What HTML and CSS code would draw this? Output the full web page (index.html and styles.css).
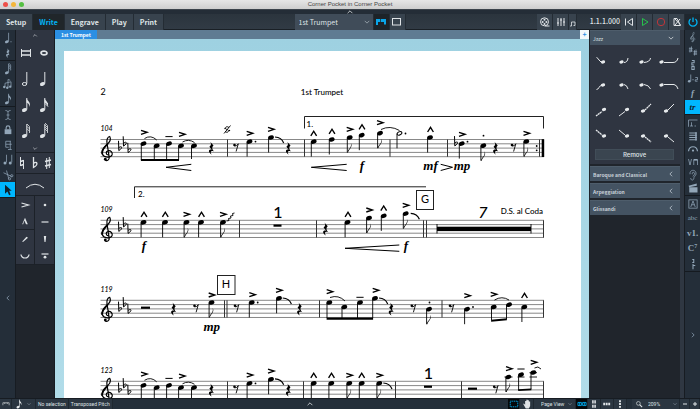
FILE: index.html
```html
<!DOCTYPE html>
<html lang="en">
<head>
<meta charset="utf-8">
<title>Corner Pocket in Corner Pocket</title>
<link rel="stylesheet" href="styles.css">
</head>
<body>
<svg class="defs" width="0" height="0" aria-hidden="true">
  <defs>
    <ellipse id="head" rx="3" ry="2.100" transform="rotate(-22)"/>
    <g id="qd"><use href="#head"/><path d="M-2.4 .6V15" class="ln"/></g>
    <g id="ed"><use href="#qd"/><path d="M-2.4 15C-1.5 11 2.2 10.5 1.2 5.5C3.4 9.500-.6 11.500-1.700 15Z"/></g>
    <g id="hd"><ellipse rx="2.5" ry="1.600" transform="rotate(-25)" fill="none" stroke="currentColor" stroke-width="1"/><path d="M-2.500 .5V15" class="ln"/></g>
    <path id="qr" d="M-1.300-6.500L2-2.800C.2-1 .3.500 2.500 3.200C-.2 2-1.900 3.200.2 6.600C-3.800 3.800-3.200.9.300 1.500L-2.100-1.500C0-3.200-.2-4.600-1.300-6.500Z"/>
    <g id="er"><circle cx="-1.500" cy="-2" r="1.300"/><path d="M-1.600-.9Q1-.6 2.300-3.200L.1 4.500" class="ln" stroke-width="1"/></g>
    <path id="flat" d="M-1.500-7.500L-1.200 2.300C3-.3 2.200-3-1.200-.7" fill="none" stroke="currentColor" stroke-width="1"/>
    <g id="clef"><path d="M.8 6.500C-2 6.300-1.800 2.900.3 2.300C3.400 1.600 5.300 4 4.600 6.200C3.200 9.700-3.600 9.200-5.200 5.500C-6.300.8-2.200-2 .3-4.600C3-7.400 3.400-10 2.200-12C0-11.700-1-8.500-.5-5.500L1.700 8.700C2.100 11.800-.9 12.900-2.600 11.300" fill="none" stroke="currentColor" stroke-width="1.200"/><path d="M-5.200 5.500C-6.300.8-2.200-2 .3-4.600" fill="none" stroke="currentColor" stroke-width="1.800"/><circle cx="-2.200" cy="10.700" r="1.400"/></g>
    <path id="acc" d="M-3-2L3 0L-3 2" fill="none" stroke="currentColor" stroke-width="1.400"/>
    <path id="mar" d="M-2.900 2.300L0-2.300L2.900 2.300" fill="none" stroke="currentColor" stroke-width="1.400"/>
    <path id="ten" d="M-3.600 0H3.600" fill="none" stroke="currentColor" stroke-width="1"/>
    <circle id="dot" r=".9"/>
    <path id="fall" d="M0 0Q6.500.3 8.700 6" fill="none" stroke="currentColor" stroke-width="1.200"/>
    <g id="staff"><path d="M100.500 0H544M100.500 4.300H544M100.500 8.600H544M100.500 12.900H544M100.500 17.200H544" fill="none" stroke="#555" stroke-width=".7"/>
      <use href="#clef" x="107.500" y="9"/><use href="#flat" x="120" y="8.800"/><use href="#flat" x="124.700" y="4.300"/><use href="#flat" x="129.300" y="10.800"/></g>
    <path id="bar" d="M0 0V17.200" fill="none" stroke="#333" stroke-width="1"/>
    <g id="opening">
      <use href="#head" x="143.500" y="143.600"/><use href="#head" x="156.700" y="145.800"/><use href="#head" x="169" y="143.600"/><use href="#head" x="181" y="145.800"/><use href="#head" x="194" y="145.800"/>
      <path class="ln" d="M141.300 144V160M154.300 146V160M166.600 144V160M178.600 146V160M191.500 146V159"/><path d="M140.900 159H179V161H140.900Z"/>
      <use href="#acc" x="144" y="132.300"/><use href="#ten" x="169" y="136.600"/><use href="#acc" x="182" y="134.300"/>
      <path class="slur" d="M144.500 138.500Q151 134.500 156.700 140M182.500 142Q188.500 138.500 194.500 142.500"/>
      <use href="#qr" x="211.500" y="148.200"/><use href="#bar" x="227.500" y="139.500"/><use href="#er" x="236" y="147"/>
      <use href="#qd" x="249.500" y="141.600"/><use href="#dot" x="255.500" y="141.600"/><use href="#acc" x="249.700" y="133.300"/>
      <use href="#qd" x="271" y="137.500"/><use href="#acc" x="271" y="129.300"/><use href="#fall" x="275" y="137"/><use href="#qr" x="288.500" y="148.200"/>
    </g>
    <path id="down" d="M-3-1.500L0 1.500L3-1.500" class="ic"/>
    <path id="up" d="M-3 1.500L0-1.500L3 1.500" class="ic"/>
    <path id="left" d="M1.500-3L-1.500 0L1.500 3" class="ic"/>
    <path id="right" d="M-1.500-3L1.500 0L-1.500 3" class="ic"/>
    <g id="n4"><ellipse cx="-1.500" cy="5" rx="2.600" ry="1.900" transform="rotate(-20 -1.500 5)"/><path class="ic" d="M.8 4.500V-7"/></g>
    <g id="n8"><use href="#n4"/><path d="M.5-7C1-4 5.500-3 3.600 2C3.600-1 1.500-2 .5-2.500Z"/></g>
    <g id="n16"><use href="#n8"/><path class="ic" d="M1-4L4-1M1-1.500L4 1.500"/></g>
    <g id="n32"><use href="#n4"/><path class="ic" stroke-width=".8" d="M1-7L3.500-4.500M1-4.600L3.500-2.100M1-2.200L3.500 .3M3.500-4.500V2"/></g>
    <g id="n64"><use href="#n4"/><path class="ic" stroke-width=".8" d="M1-8L3.500-5.500M1-6L3.500-3.500M1-4L3.500-1.500M1-2L3.500 .5M3.500-5.500V2"/></g>
    <ellipse id="nh" rx="2.200" ry="1.600" transform="rotate(-15)"/>
  </defs>
</svg>

<header class="titlebar">
  <div class="lights"><i class="close"></i><i class="min"></i><i class="max"></i></div>
  <h1>Corner Pocket in Corner Pocket</h1>
</header>
<button class="reveal" aria-label="Hide toolbar"><svg viewBox="-5 -2.500 10 5"><use href="#up"/></svg></button>

<div class="toolbar">
  <nav class="modes">
    <button>Setup</button><button class="on">Write</button><button>Engrave</button><button>Play</button><button>Print</button>
  </nav>
  <div class="layouts">
    <label class="pick"><select aria-label="Layout"><option>1st Trumpet</option></select><svg viewBox="-8 -8 16 16"><use href="#down"/></svg></label>
    <button class="on" aria-label="Tabs"><svg viewBox="0 0 16 16"><path d="M3 5H13V10.500H11V8H5V11H3Z" fill="#0aa5e8"/><path d="M7.500 5V8" stroke="#17303d" stroke-width=".8"/></svg></button>
    <button aria-label="Window"><svg viewBox="0 0 16 16"><rect x="3.500" y="4.500" width="8" height="6.500" class="ic"/></svg></button>
  </div>
  <div class="transport">
    <button aria-label="Video"><svg viewBox="0 0 16 16"><circle cx="7.500" cy="7.800" r="4" class="ic"/><circle cx="7.500" cy="5.700" r="1"/><circle cx="5.600" cy="8" r="1"/><circle cx="9.400" cy="8" r="1"/><circle cx="7.500" cy="10" r="1"/><path class="ic" d="M8 12H12.500"/></svg></button>
    <button aria-label="Mixer"><svg viewBox="0 0 16 16"><path class="ic" d="M5 4V12M8 4V12M11 4V12M4 9H6M7 6H9M10 8H12"/></svg></button>
    <button class="slim" aria-label="Score"><svg viewBox="4 0 8 16"><path class="ic" stroke-width=".8" d="M6.500 12V8H10V11.500M5 12H6.500M8.500 11.500H10"/></svg></button>
    <output>1.1.1.000</output>
    <button aria-label="Rewind"><svg viewBox="0 0 16 16"><path class="ic" d="M4.500 4.500V11.500M11.500 4.500L6.500 8L11.500 11.500Z"/></svg></button>
    <button aria-label="Play"><svg viewBox="0 0 16 16"><path d="M5.500 4.500L11 8L5.500 11.500Z" fill="none" stroke="#27c24c"/></svg></button>
    <button aria-label="Record"><svg viewBox="0 0 16 16"><circle cx="8" cy="8" r="3.700" fill="none" stroke="#c0353a"/></svg></button>
    <button aria-label="Click"><svg viewBox="0 0 16 16"><path class="ic" d="M5 4.500H8L11.500 11.500H5Z M6 5L11.500 11M6 11L11 5"/></svg></button>
    <button class="power" aria-label="Activate"><svg viewBox="0 0 16 16"><path class="ic" stroke-width="1.300" d="M5.600 5A4 4 0 1 0 10.400 5M8 3.500V8"/></svg></button>
  </div>
</div>

<main>
  <aside class="tools">
    <div class="group">
      <button aria-label="Notes"><svg viewBox="-8 -8 16 16"><use href="#n4"/><circle cx="4" cy="5" r=".8"/></svg></button>
      <button aria-label="Rests"><svg viewBox="-8 -8 16 16"><use href="#qr"/></svg></button>
    </div>
    <div class="group">
      <button aria-label="Grace notes"><svg viewBox="-8 -8 16 16"><use href="#n64"/></svg></button>
      <button aria-label="Tuplets"><svg viewBox="-8 -8 16 16"><path class="ic" d="M-4 4V-1L4-3V3M0 5V-6L3-5"/><circle cx="-5" cy="4" r="1.600"/><circle cx="-1" cy="5" r="1.600"/><circle cx="3" cy="3.500" r="1.600"/></svg></button>
      <button aria-label="Grace"><svg viewBox="-8 -8 16 16"><use href="#n8"/></svg></button>
    </div>
    <div class="group">
      <button aria-label="Insert"><svg viewBox="-8 -8 16 16"><path class="ic" d="M-3.500-6Q0-6 0-4V4Q0 6-3.500 6M3.500-6Q0-6 0-4M0 4Q0 6 3.500 6M-2 0H2"/></svg></button>
      <button aria-label="Lock"><svg viewBox="-8 -8 16 16"><rect x="-4.500" y="-1" width="9" height="6.500"/><path class="ic" stroke-width="1.500" d="M-2.500-1V-3A2.500 2.500 0 0 1 2.500-3V-1"/></svg></button>
      <button aria-label="Voices"><svg viewBox="-8 -8 16 16"><path class="ic" d="M4-5H-3V3H1M3-5V6M-3-1H5M0 6H5"/></svg></button>
      <button aria-label="Beams"><svg viewBox="-8 -8 16 16"><path class="ic" d="M-2-7V3M5-7V3"/><circle cx="-4" cy="4" r="2"/><circle cx="3" cy="4" r="2"/></svg></button>
      <button aria-label="Scissors"><svg viewBox="-8 -8 16 16"><path class="ic" d="M-6-3L5 2M-2-6L1 5"/><circle cx="2" cy="5" r="1.500" class="ic"/><circle cx="5" cy="1" r="1.500" class="ic"/></svg></button>
      <button class="on" aria-label="Select"><svg viewBox="-8 -8 16 16"><path d="M-4-7L5 1H1.500L3.500 6L1.500 7L-.8 2L-4 5Z"/></svg></button>
    </div>
    <button class="fold" aria-label="Hide left panel"><svg viewBox="-8 -8 16 16"><use href="#left"/></svg></button>
  </aside>

  <section class="palette">
    <div class="durations">
      <button class="wide first" aria-label="Fewer"><svg viewBox="-5 -2.500 10 5"><use href="#up"/></svg></button>
      <button aria-label="Double whole"><svg viewBox="-8 -8 16 16"><path class="ic" stroke-width="1.500" d="M-4.500-2H4.500M-4.500 2H4.500"/><path class="ic" d="M-4.500-4V4M4.500-4V4"/></svg></button>
      <button aria-label="Whole"><svg viewBox="-8 -8 16 16"><ellipse rx="3" ry="1.800" class="ic" stroke-width="1.700"/></svg></button>
      <button aria-label="Half"><svg viewBox="-8 -8 16 16"><ellipse cx="-1.500" cy="5" rx="2.200" ry="1.500" class="ic"/><path class="ic" d="M.8 4.500V-7"/></svg></button>
      <button aria-label="Quarter"><svg viewBox="-8 -8 16 16"><use href="#n4"/></svg></button>
      <button aria-label="Eighth"><svg viewBox="-8 -8 16 16"><use href="#n8"/></svg></button>
      <button aria-label="16th"><svg viewBox="-8 -8 16 16"><use href="#n16"/></svg></button>
      <button aria-label="32nd"><svg viewBox="-8 -8 16 16"><use href="#n32"/></svg></button>
      <button aria-label="64th"><svg viewBox="-8 -8 16 16"><use href="#n64"/></svg></button>
      <button class="wide" aria-label="More"><svg viewBox="-5 -2.500 10 5"><use href="#down"/></svg></button>
    </div>
    <div class="accidentals">
      <button aria-label="Natural"><svg viewBox="-6 -8 12 16"><path class="ic" d="M-1.500-6V3M1.500-3V6"/><path class="ic" stroke-width="1.500" d="M-1.500-1.500L1.500-2.500M-1.500 2.500L1.500 1.500"/></svg></button>
      <button aria-label="Flat"><svg viewBox="-6 -8 12 16"><path class="ic" stroke-width="1.300" d="M-1.500-6V4.500C4 1.500 2-2.500-1.500 .5"/></svg></button>
      <button aria-label="Sharp"><svg viewBox="-6 -8 12 16"><path class="ic" d="M-1.300-5V6M1.300-6V5"/><path class="ic" stroke-width="1.700" d="M-3-1.500L3-3M-3 3L3 1.500"/></svg></button>
    </div>
    <div class="slur-row"><button aria-label="Slur"><svg viewBox="-10 -8 20 16"><path class="ic" d="M-9 3Q0-4.500 9 3"/></svg></button></div>
    <div class="marks">
      <button aria-label="Accent"><svg viewBox="-8 -8 16 16"><path class="ic" stroke-width="1.200" d="M-3.500-2L3.500 0L-3.500 2"/></svg></button>
      <button aria-label="Staccato"><svg viewBox="-8 -8 16 16"><circle r="1.300"/></svg></button>
      <button aria-label="Marcato"><svg viewBox="-8 -8 16 16"><path d="M-2.800 3.200L0-3.200L2.800 3.200H1L-.7-.5L-1.800 3.200Z"/></svg></button>
      <button aria-label="Tenuto"><svg viewBox="-8 -8 16 16"><path class="ic" stroke-width="1.200" d="M-3.500 0H3.500"/></svg></button>
      <button aria-label="Stress"><svg viewBox="-8 -8 16 16"><path d="M-2.800 2.600L1.500-2.300L3-1.200L-2 3Z"/></svg></button>
      <button aria-label="Staccatissimo"><svg viewBox="-8 -8 16 16"><path d="M-1.200-3H1.200L.5 3H-.5Z"/></svg></button>
      <button aria-label="Unstress"><svg viewBox="-8 -8 16 16"><path class="ic" stroke-width="1.200" d="M-4-1.500A4 3.500 0 0 0 4-1.500"/></svg></button>
      <button aria-label="Tenuto staccato"><svg viewBox="-8 -8 16 16"><path class="ic" stroke-width="1.200" d="M-3.500-2H3.500"/><circle cy="1.200" r="1.400"/></svg></button>
    </div>
  </section>

  <section class="canvas">
    <div class="tabs"><button class="tab">1st Trumpet</button><button class="add" aria-label="New tab">+</button></div>
    <div class="desk">
      <div class="page">
        <svg class="score" viewBox="64 51 517 348" preserveAspectRatio="xMinYMin meet" role="img" aria-label="1st Trumpet part">
          <text x="100.500" y="94.500" class="t9">2</text>
          <text x="322" y="94.500" class="t8 mid">1st Trumpet</text>

          <text x="100.500" y="131" class="num">104</text>
          <use href="#staff" y="139.500"/><use href="#opening"/>
          <path class="slur" d="M229 127.500C226 125 224 129 227 129.500C230 130 228 134 225 131.500M224 133.500L230.500 125.500"/><circle cx="225" cy="128.500" r=".7"/><circle cx="229.500" cy="130.500" r=".7"/>
          <path class="pin" d="M191.300 164.300L166 167.300L191.300 170.500M346.700 164.300L311.300 167.300L346.700 170.500M440.700 164.300L452.500 167.300L440.700 170.500"/>
          <path class="frame" d="M304.500 128.500V116.500H543.500V128.500"/><text x="306.500" y="126.500" class="t8">1.</text>
          <use href="#bar" x="304.500" y="139.500"/>
          <use href="#qd" x="313.700" y="141.600"/><use href="#mar" x="313.700" y="133.500"/>
          <use href="#qd" x="331.700" y="139.500"/><use href="#mar" x="332" y="131.500"/>
          <use href="#ed" x="349.700" y="137.500"/><use href="#acc" x="349.700" y="129.300"/>
          <use href="#qd" x="361.700" y="135.200"/><use href="#mar" x="362" y="127"/>
          <use href="#ed" x="380" y="133.200"/><use href="#acc" x="380" y="122.700"/>
          <path class="slur" d="M381 129.500Q390 125 399.500 130.500"/>
          <use href="#bar" x="390" y="139.500"/><use href="#hd" x="399.500" y="133.300"/><use href="#dot" x="405.500" y="133.500"/>
          <use href="#qd" x="430" y="137.500"/><use href="#mar" x="430.500" y="129.700"/><use href="#bar" x="447.500" y="139.500"/>
          <use href="#flat" x="456" y="143.600"/><use href="#qd" x="461.700" y="143.600"/><use href="#dot" x="467.500" y="141.700"/><use href="#acc" x="462" y="134.300"/>
          <use href="#ed" x="483.300" y="145.700"/><use href="#dot" x="483.500" y="135.700"/>
          <use href="#qr" x="495.700" y="148.200"/><use href="#er" x="513.500" y="147"/>
          <use href="#ed" x="526.300" y="141.500"/><use href="#acc" x="526.500" y="133.300"/>
          <use href="#dot" x="536.700" y="146"/><use href="#dot" x="536.700" y="150.300"/><use href="#bar" x="539.500" y="139.500"/><rect x="541.700" y="139.200" width="2.500" height="17.800"/>
          <text x="362" y="170" class="dyn">f</text><text x="430.500" y="170" class="dyn">mf</text><text x="462" y="170" class="dyn">mp</text>

          <text x="100.500" y="211.500" class="num">109</text>
          <use href="#staff" y="220.300"/>
          <path class="frame" d="M134.500 198V186.800H426"/><text x="138" y="196.500" class="t8">2.</text>
          <use href="#qd" x="143.500" y="222.300"/><use href="#mar" x="144" y="214.500"/><use href="#qd" x="165" y="222.300"/><use href="#mar" x="165.300" y="214.500"/>
          <use href="#ed" x="186.500" y="222.300"/><use href="#acc" x="186.500" y="214.300"/><use href="#qd" x="201" y="222.300"/><use href="#mar" x="201.500" y="214.500"/>
          <use href="#ed" x="223" y="222.300"/><use href="#acc" x="223" y="214.300"/>
          <path class="slur" d="M226.500 221L229 220.500L228.500 218.500L231 218L230.500 216L233 215.500L232.500 213.500L234.500 213"/>
          <use href="#bar" x="239.500" y="220.300"/><text x="278" y="217.500" class="count">1</text><rect x="273.500" y="224.500" width="8" height="2.200"/><use href="#bar" x="316.500" y="220.300"/>
          <use href="#qr" x="325.700" y="229"/>
          <use href="#qd" x="347.500" y="222.300"/><use href="#mar" x="348" y="214.500"/><use href="#ed" x="369" y="218"/><use href="#acc" x="369.300" y="210"/>
          <use href="#qd" x="383.700" y="215.900"/><use href="#mar" x="383.700" y="208.300"/><use href="#ed" x="405.700" y="213.600"/><use href="#acc" x="405.700" y="205.300"/><use href="#fall" x="410.700" y="213.300"/>
          <path class="pin" d="M399.300 245L345 248.300L399.300 251.300"/>
          <text x="144" y="250" class="dyn">f</text><text x="406" y="250" class="dyn">f</text>
          <use href="#bar" x="423.500" y="220.300"/><use href="#bar" x="426.500" y="220.300"/>
          <rect x="416.500" y="190.500" width="17" height="19" class="frame"/><text x="425" y="202.500" class="reh">G</text>
          <rect x="437" y="226.700" width="94" height="4.400"/><path class="ln" d="M437 224V233.500M531 224V233.500"/>
          <text x="483" y="217.500" class="count slant">7</text><text x="543" y="213.500" class="t8 end">D.S. al Coda</text><use href="#bar" x="543.500" y="220.300"/>

          <text x="100.500" y="291.500" class="num">119</text>
          <use href="#staff" y="300.300"/>
          <rect x="141" y="306.600" width="9" height="2.200"/><use href="#qr" x="173.700" y="309"/><use href="#er" x="196" y="307.800"/>
          <use href="#ed" x="211.500" y="302.500"/><use href="#acc" x="211.700" y="295"/><text x="211.700" y="331" class="dyn">mp</text>
          <use href="#bar" x="224.500" y="300.300"/><use href="#bar" x="227" y="300.300"/>
          <rect x="217.500" y="275.500" width="17.500" height="19" class="frame"/><text x="226" y="287.500" class="reh">H</text>
          <use href="#er" x="236.500" y="307.800"/><use href="#qd" x="251.700" y="302.500"/><use href="#dot" x="257.700" y="302.500"/><use href="#acc" x="252.300" y="294.700"/>
          <use href="#qd" x="279" y="298.300"/><use href="#acc" x="279" y="290.300"/><use href="#fall" x="282.700" y="298"/><use href="#qr" x="299.700" y="309"/><use href="#bar" x="319.500" y="300.300"/>
          <use href="#head" x="329.300" y="302.500"/><use href="#head" x="344.300" y="307"/><use href="#head" x="360" y="302.500"/><use href="#head" x="375" y="298.300"/>
          <path class="ln" d="M327 303V318M342 307V318M357.500 303V318M372.700 299V318"/><path d="M326.600 317.500H373.100V319.700H326.600Z"/>
          <use href="#acc" x="329.700" y="291.700"/><use href="#ten" x="360" y="297.300"/><use href="#acc" x="375.700" y="290.300"/>
          <path class="slur" d="M330 297.500Q338.500 294.500 345 301"/><use href="#fall" x="379" y="298"/><use href="#qr" x="391.300" y="309"/><use href="#er" x="413.300" y="307.800"/>
          <use href="#ed" x="429" y="309.200"/><use href="#dot" x="429.500" y="302.500"/><use href="#bar" x="442" y="300.300"/><use href="#er" x="451.500" y="307.800"/>
          <use href="#qd" x="467" y="309.200"/><use href="#dot" x="473" y="307"/><use href="#acc" x="467.300" y="295.700"/>
          <use href="#head" x="493.700" y="307"/><use href="#head" x="509" y="304.700"/><path class="ln" d="M491.500 307V320M506.500 305V319"/><path d="M491.100 319.700L506.900 318.200V320.300L491.100 321.800Z"/>
          <use href="#acc" x="493.700" y="294.300"/><path class="slur" d="M494.500 300Q502 295.500 509 300"/><use href="#qd" x="524.300" y="307"/><use href="#mar" x="524.500" y="295.700"/><use href="#bar" x="543.500" y="300.300"/>

          <text x="100.500" y="372.500" class="num">123</text>
          <use href="#staff" y="381.300"/><use href="#opening" y="241.800"/><use href="#bar" x="303.500" y="381.300"/>
          <use href="#qd" x="313.700" y="383.300"/><use href="#mar" x="313.700" y="375.500"/><use href="#qd" x="331.300" y="383.300"/><use href="#mar" x="331.500" y="375.500"/>
          <use href="#ed" x="349.300" y="383.300"/><use href="#acc" x="349.300" y="375.300"/><use href="#qd" x="361.700" y="383.300"/><use href="#mar" x="361.700" y="375.500"/>
          <use href="#ed" x="379.300" y="383.300"/><use href="#acc" x="379.300" y="375.300"/><use href="#fall" x="383.300" y="383"/>
          <use href="#bar" x="395.500" y="381.300"/><text x="428.500" y="378.500" class="count">1</text><rect x="424" y="385.600" width="8" height="2.200"/><use href="#bar" x="461.500" y="381.300"/>
          <rect x="468" y="387.600" width="9" height="2.200"/><use href="#er" x="495.700" y="388.800"/>
          <use href="#ed" x="508.300" y="377"/><path class="ln" d="M504.500 377H512.500M517.500 377H524.500M529.500 377H537M529.500 372.700H537"/><use href="#acc" x="509" y="368.700"/>
          <use href="#head" x="521" y="374.700"/><use href="#head" x="533.300" y="372.500"/><path class="ln" d="M518.600 375V390M531 373V389"/><path d="M518.200 389.200L531.400 388.500V390.300L518.200 391Z"/>
          <use href="#ten" x="521" y="369"/><use href="#acc" x="533.700" y="362.300"/><path class="slur" d="M534.500 368Q538 365.500 541 369"/><use href="#bar" x="543.500" y="381.300"/>
        </svg>
      </div>
    </div>
  </section>

  <aside class="techniques">
    <section class="jazz">
      <button class="head"><span>Jazz</span><svg viewBox="-8 -8 16 16"><use href="#down"/></svg></button>
      <div class="grid">
        <button aria-label="Plop"><svg viewBox="-11 -8 22 16"><use href="#nh" x="2" y="1"/><path class="ic" d="M-4.500-3.500Q-3-3-2-1L0 1"/></svg></button>
        <button aria-label="Doit short"><svg viewBox="-11 -8 22 16"><use href="#nh" x="-2.500" y="1"/><path class="ic" d="M0 1.500Q3.500 1.500 4-3"/></svg></button>
        <button aria-label="Doit medium"><svg viewBox="-11 -8 22 16"><use href="#nh" x="-4.500" y="1"/><path class="ic" d="M-2 1.500Q4 1 4.500-3"/></svg></button>
        <button aria-label="Doit long"><svg viewBox="-11 -8 22 16"><use href="#nh" x="-7.500" y="1"/><path class="ic" d="M-5 1.500H4Q8 1.500 9-3"/></svg></button>
        <button aria-label="Scoop"><svg viewBox="-11 -8 22 16"><use href="#nh" x="2" y="-1"/><path class="ic" d="M-4.500 3.500Q-3 3.500-2 1.500Q-1-.5 1-1"/></svg></button>
        <button aria-label="Fall short"><svg viewBox="-11 -8 22 16"><use href="#nh" x="-2.500" y="-1"/><path class="ic" d="M0-1.500Q3-1 4 3"/></svg></button>
        <button aria-label="Fall medium"><svg viewBox="-11 -8 22 16"><use href="#nh" x="-4.500" y="-1"/><path class="ic" d="M-2-1.500Q3-1 4.500 3"/></svg></button>
        <button aria-label="Fall long"><svg viewBox="-11 -8 22 16"><use href="#nh" x="-7.500" y="-1"/><path class="ic" d="M-5-1.500H5Q8-1 9 3"/></svg></button>
        <button aria-label="Bend up"><svg viewBox="-11 -8 22 16"><use href="#nh" x="3" y="-1.500"/><path class="ic" d="M-5 5L1 .5" stroke-width="1.300" stroke-dasharray="2 .4"/></svg></button>
        <button aria-label="Bend up smooth"><svg viewBox="-11 -8 22 16"><use href="#nh" x="3" y="-1.500"/><path class="ic" d="M-5 5L1 .5"/></svg></button>
        <button aria-label="Lift rough"><svg viewBox="-11 -8 22 16"><use href="#nh" x="-3" y="0"/><path class="ic" stroke-width="1.300" d="M-1-1L5-7" stroke-dasharray="2 .4"/></svg></button>
        <button aria-label="Lift smooth"><svg viewBox="-11 -8 22 16"><use href="#nh" x="-3" y="0"/><path class="ic" d="M-1-1L5-7"/></svg></button>
        <button aria-label="Slide rough"><svg viewBox="-11 -8 22 16"><use href="#nh" x="3" y="0"/><path class="ic" stroke-width="1.300" d="M-5-6L1-1" stroke-dasharray="2 .4"/></svg></button>
        <button aria-label="Slide smooth"><svg viewBox="-11 -8 22 16"><use href="#nh" x="3" y="0"/><path class="ic" d="M-5-6L1-1"/></svg></button>
        <button aria-label="Drop rough"><svg viewBox="-11 -8 22 16"><use href="#nh" x="-3" y="0"/><path class="ic" stroke-width="1.300" d="M-1 1L5 6" stroke-dasharray="2 .4"/></svg></button>
        <button aria-label="Drop smooth"><svg viewBox="-11 -8 22 16"><use href="#nh" x="-3" y="0"/><path class="ic" d="M-1 1L5 6"/></svg></button>
      </div>
      <button class="remove">Remove</button>
    </section>
    <button class="head closed"><span>Baroque and Classical</span><svg viewBox="-8 -8 16 16"><use href="#left"/></svg></button>
    <button class="head closed"><span>Arpeggiation</span><svg viewBox="-8 -8 16 16"><use href="#left"/></svg></button>
    <button class="head closed"><span>Glissandi</span><svg viewBox="-8 -8 16 16"><use href="#left"/></svg></button>
  </aside>
  <div class="gutter"></div>

  <aside class="tools right">
    <div class="group">
      <button aria-label="Clefs"><svg viewBox="-15 -15 30 30"><use href="#clef"/></svg></button>
      <button aria-label="Key signatures"><svg viewBox="-8 -8 16 16"><path class="ic" d="M-4-5V2M-2-6V1M-5.500-3H-.5M-5.500 0H-.5M2-1V6M4-2V5M.5 1H5.500M.5 4H5.500"/></svg></button>
      <button aria-label="Time signatures"><svg viewBox="-8 -8 16 16"><path class="ic" stroke-width="1.400" d="M-1.500-6H1.500V-3H-1.500V0H1.500M-1.500 2H1.500V6H-1.500Z"/></svg></button>
      <button aria-label="Tempo"><svg viewBox="-8 -8 16 16"><path class="ic" d="M-3-6V3M-1 1H1M3-2H6V1H3V3H6"/><circle cx="-5" cy="3" r="1.800"/></svg></button>
      <button class="serif" aria-label="Dynamics"><i>f</i></button>
      <button class="on serif" aria-label="Ornaments"><i>tr</i></button>
    </div>
    <div class="group tight">
      <button aria-label="Repeats"><svg viewBox="-8 -8 16 16"><path class="ic" d="M-6 5V-4H6M-2-1V4M-4 4H0M2 4H4"/></svg></button>
      <button aria-label="Bars"><svg viewBox="-8 -8 16 16"><path class="ic" stroke-width="1.500" d="M-5-4H5M-5-1H5M-5 2H5M-5 5H5"/><path class="ic" stroke-width="2" d="M4-5V6"/></svg></button>
      <button aria-label="Holds"><svg viewBox="-8 -8 16 16"><path class="ic" stroke-width="1.600" d="M-6 3C-5-5 5-5 6 3"/><circle cy="2" r="1.500"/></svg></button>
      <button aria-label="Playing techniques"><svg viewBox="-8 -8 16 16"><path class="ic" d="M-6-4L-4 4L-2-4M1 4V-3H6V4"/><path class="ic" stroke-width="2" d="M1-3H6"/></svg></button>
      <button aria-label="Listen"><svg viewBox="-8 -8 16 16"><path class="ic" d="M-4-1C-5-8 5-8 4-1C3 2 1 2 1 5C0 8-3 7-3 4M-1-1C-2-5 3-4 2-1L0 2"/></svg></button>
      <button aria-label="Video"><svg viewBox="-8 -8 16 16"><path d="M-5-1H6V6H-5ZM-6-3L5-6V-3L-5-1Z"/></svg></button>
    </div>
    <div class="group tall">
      <button aria-label="Rehearsal marks"><svg viewBox="-8 -8 16 16"><rect x="-5.500" y="-5.500" width="11" height="11" class="ic"/><path class="ic" d="M-3 4L0-4L3 4M-2 1H2"/></svg></button>
      <button class="serif small">abc</button>
      <button class="serif">v1.</button>
      <button class="serif">C<sup>7</sup></button>
      <button aria-label="Fingering"><svg viewBox="-8 -8 16 16"><path class="ic" stroke-width="1.400" d="M-1-6H1V-2H-1M0 0V7M0 2H3"/></svg></button>
    </div>
    <button class="fold" aria-label="Hide right panel"><svg viewBox="-8 -8 16 16"><use href="#right"/></svg></button>
  </aside>
</main>

<footer>
  <div class="side">
    <button aria-label="Keyboard"><svg viewBox="-8 -5 16 10"><path class="ic" d="M-5-2H5M-5 2V-2M-2 0V-2M2 0V-2M5 2V-2"/></svg></button>
    <button class="pick voice" aria-label="Voice"><svg viewBox="-8 -8 16 16"><use href="#n8"/></svg><svg viewBox="-8 -8 16 16"><use href="#down"/></svg></button>
    <span>No selection</span><span>Transposed Pitch</span>
  </div>
  <button class="mid" aria-label="Show lower panel"><svg viewBox="-5 -4 10 8"><use href="#up"/></svg></button>
  <div class="side end">
    <button class="on" aria-label="Marquee"><svg viewBox="-8 -6 16 12"><rect x="-6" y="-4.500" width="12" height="9" class="ic" stroke-width="1.500" stroke-dasharray="2 1"/></svg></button>
    <button class="hand" aria-label="Hand"><svg viewBox="-8 -8 16 16"><path d="M-5-1L-3 1V-5H-1V-7H1V-6H3V-4H5V3L3 7H-2L-6 0Z"/></svg></button>
    <label class="pick view"><select aria-label="View"><option>Page View</option></select><svg viewBox="-8 -8 16 16"><use href="#down"/></svg></label>
    <button class="on" aria-label="Spreads horizontal"><svg viewBox="-8 -6 16 12"><path class="ic" stroke-width="1.500" d="M-6.500-2.500H-1V2.500H-6.500ZM1-2.500H6.500V2.500H1ZM-3.700-2V2M3.700-2V2"/></svg></button>
    <button class="page-mode" aria-label="Spreads vertical"><svg viewBox="-8 -8 16 16"><path d="M-3-6H-.5V-1H-3ZM.5-6H3V-1H.5ZM-3 1H-.5V6H-3ZM.5 1H3V6H.5Z"/></svg></button>
    <button class="page-mode" aria-label="Pages horizontal"><svg viewBox="-8 -8 16 16"><path d="M-6-2H-3V2H-6ZM-2-2H1V2H-2ZM2-2H5V2H2Z"/></svg></button>
    <button class="page-mode" aria-label="Pages vertical"><svg viewBox="-8 -8 16 16"><path d="M-1.500-6H1.500V-3H-1.500ZM-1.500-1.500H1.500V1.500H-1.500ZM-1.500 3H1.500V6H-1.500Z"/></svg></button>
    <button class="search" aria-label="Find zoom"><svg viewBox="-8 -8 16 16"><circle cx="-1" cy="-1" r="3" class="ic"/><path class="ic" stroke-width="1.800" d="M1 1L5 5"/></svg></button>
    <label class="pick zoom"><select aria-label="Zoom"><option>209%</option></select><svg viewBox="-8 -8 16 16"><use href="#down"/></svg></label>
    <button class="step" aria-label="Zoom out"><svg viewBox="-8 -8 16 16"><path class="ic" stroke-width="2" d="M-4 0H4"/></svg></button>
    <button class="step" aria-label="Zoom in"><svg viewBox="-8 -8 16 16"><path class="ic" stroke-width="2" d="M-4 0H4M0-4V4"/></svg></button>
  </div>
</footer>
</body>
</html>
```

FILE: styles.css
```css
* { box-sizing: border-box; }
html, body { height: 100%; }
body {
  margin: 0;
  display: flex;
  flex-direction: column;
  overflow: hidden;
  background: #20262e;
  color: #dfe3e6;
  font-family: "Noto Sans CJK SC", "Open Sans", sans-serif;
  font-size: 7px;
  line-height: 9px;
}
button, select {
  margin: 0;
  padding: 0;
  border: 0;
  border-radius: 0;
  background: none;
  color: inherit;
  font: inherit;
  appearance: none;
}
button { display: flex; align-items: center; justify-content: center; }
svg { display: block; fill: currentColor; }
.defs { position: absolute; }
.ic { fill: none; stroke: currentColor; }
.ln { fill: none; stroke: currentColor; stroke-width: .9; }

.titlebar {
  display: grid;
  grid-template-columns: 1fr auto 1fr;
  align-items: center;
  height: 9px;
  background: linear-gradient(#e6e6e6, #cecece);
  color: #444;
}
.titlebar h1 { margin: 0; font: 6px/9px "Liberation Sans", sans-serif; }
.lights { display: flex; gap: 3px; padding-left: 3px; }
.lights i { width: 5px; height: 5px; border-radius: 50%; }
.lights .close { background: #ee5048; }
.lights .min { background: #f3b63c; }
.lights .max { background: #55c043; }

.reveal { height: 5px; background: #242d37; border-top: 1px solid #3b434b; }
.reveal svg { width: 8px; height: 4px; }

.toolbar {
  display: grid;
  grid-template-columns: 1fr auto 1fr;
  height: 16px;
  background: linear-gradient(#2b343d, #313b45);
  border-bottom: 1px solid #1a2026;
}
.modes, .layouts, .transport { display: flex; }
.modes button {
  padding: 0 6px;
  border-right: 1px solid #242c34;
  background: #38434e;
  font-weight: 700;
}
.modes button.on { background: #20262a; color: #00b4f5; }
.layouts > *, .transport button { border-right: 1px solid #242c34; }
.layouts button, .transport button { width: 16px; background: #38434e; }
.layouts button.on { background: #1d2328; }
.layouts svg, .transport svg { flex: none; width: 16px; height: 16px; }
.pick { display: flex; align-items: center; background: #404c59; }
.pick select { flex: 1; min-width: 0; }
.pick svg { flex: none; color: #a7b1ba; }
.layouts .pick { width: 79px; padding-left: 4px; }
.layouts .pick svg { width: 12px; height: 12px; }
.transport { justify-content: flex-end; }
.transport .slim { width: 8px; }
.transport .slim svg { width: 8px; }
.transport output { width: 44px; padding-right: 1px; text-align: right; line-height: 15px; font-weight: 500; }
.transport .power { width: 15px; background: #1f272f; color: #00b4f5; border: 0; }

main { flex: 1; display: flex; min-height: 0; }

.tools {
  display: flex;
  flex-direction: column;
  flex: none;
  width: 16px;
  background: #242e39;
  border-right: 1px solid #171c22;
  color: #92a6b8;
}
.tools .group { border-bottom: 1px solid #151a20; }
.tools .group button { width: 100%; height: 15px; }
.tools svg { width: 12px; height: 12px; }
.tools .on { background: #00b7ff; color: #10222e; }
.tools .fold { flex: 1; }
.tools.right { width: 15px; border: 0; }
.tools.right .group button { height: 14px; }
.tools.right .group.tight { padding: 1px 0; }
.tools.right .group.tight button { height: 13px; }
.tools.right .group.tall button { height: 15px; }
.tools .serif { font: 700 9px/13px "Liberation Serif", serif; }
.tools.right .group .small { font-size: 7px; font-weight: 400; }
.tools sup { align-self: flex-start; font-size: 6px; line-height: 10px; }

.palette {
  flex: none;
  width: 39px;
  background: #20252c;
  border-right: 1px solid #171c22;
}
.palette > div { display: grid; background: #2f3541; border-bottom: 1px solid #1c2128; }
.palette svg { width: 16px; height: 16px; }
.durations { grid-template-columns: 1fr 1fr; padding: 0 1px; }
.durations button { height: 26px; }
.durations .wide { grid-column: 1 / -1; height: 8px; }
.durations .first { height: 10px; }
.palette .wide svg { width: 6px; height: 3px; }
.accidentals { grid-template-columns: repeat(3, 1fr); height: 21px; }
.palette .accidentals svg { width: 12px; height: 16px; }
.slur-row { height: 22px; }
.palette .slur-row svg { width: 20px; }
.marks { grid-template-columns: 1fr 1fr; }
.marks button { height: 17px; }
.marks button:nth-child(odd) { border-right: 1px solid #1c2128; }
.marks button:nth-child(3) { border-bottom: 1px solid #1c2128; }

.canvas { flex: 1; min-width: 0; display: flex; flex-direction: column; }
.tabs { display: flex; justify-content: space-between; height: 9px; background: #5f7b92; }
.tab { padding: 0 6px; background: #2b8fe3; color: #fff; font-size: 5px; font-weight: 700; }
.add { width: 9px; background: #f3f8fb; color: #2b8fe3; font-weight: 700; }
.desk { flex: 1; min-height: 0; display: flex; overflow: hidden; padding: 12px 8px 0 9px; background: linear-gradient(#9ed1e1, #b1dce9); }
.page { flex: 1; min-width: 0; overflow: hidden; background: #fff; color: #000; }
.score { width: 100%; font-family: Lato, "Open Sans", sans-serif; }
.slur { fill: none; stroke: #000; stroke-width: .9; }
.pin { fill: none; stroke: #000; stroke-width: 1; }
.frame { fill: none; stroke: #222; stroke-width: 1; }
.t8 { font-size: 8px; font-weight: 500; }
.t9 { font-size: 9px; }
.num { font-size: 7px; font-style: italic; font-weight: 500; }
.mid { text-anchor: middle; }
.end { text-anchor: end; }
.reh { font-size: 11px; text-anchor: middle; }
.count { font-size: 16px; font-weight: 500; text-anchor: middle; }
.slant { font-style: italic; }
.dyn { font: italic 700 13px "Liberation Serif", serif; text-anchor: middle; }

.techniques {
  flex: none;
  width: 91px;
  display: flex;
  flex-direction: column;
  gap: 2px;
  padding-left: 1px;
  background: #20252c;
}
.jazz { background: #2f3541; padding-bottom: 4px; }
.techniques .head {
  display: flex;
  justify-content: space-between;
  width: 100%;
  height: 15px;
  padding: 0 3px;
  background: #445362;
  border-top: 1px solid #4e5d6b;
  font-size: 5px;
}
.techniques .closed { font-weight: 700; color: #c7d0d8; }
.head svg { width: 12px; height: 12px; }
.grid { display: grid; grid-template-columns: repeat(4, 1fr); padding: 3px 0 1px; color: #e7eaec; }
.grid button { height: 25px; }
.grid svg { width: 22px; height: 16px; }
.remove { width: calc(100% - 11px); height: 11px; margin: 0 5px; background: #3a4550; border: 1px solid #414d58; font-size: 6px; font-weight: 500; }
.gutter { flex: none; width: 5px; background: #2f3742; border-right: 1px solid #171c22; }

footer {
  display: flex;
  height: 11px;
  background: #242f3a;
  border-top: 1px solid #171c22;
  font-family: Roboto, "Open Sans", sans-serif;
  font-size: 5px;
}
footer .side { display: flex; align-items: stretch; }
footer .side > * { background: #2b3641; border-right: 1px solid #1f2830; }
footer .side span { padding: 0 2px; line-height: 10px; white-space: nowrap; }
footer button { width: 12px; }
footer svg { width: 10px; height: 10px; }
footer .mid { flex: 1; }
footer .mid svg { width: 8px; }
footer .side .on { background: #05080a; color: #00a5e8; }
footer .hand { width: 14px; }
footer .page-mode { width: 13px; }
footer .pick select { height: 10px; }
footer .pick svg { width: 8px; height: 8px; }
footer .voice { width: 24px; justify-content: space-between; padding: 0 2px; }
footer .voice svg:first-child { width: 10px; height: 10px; color: #e7eaec; }
footer .view { width: 42px; padding: 0 1px 0 7px; }
footer .search { margin-left: 5px; width: 14px; border: 0; }
footer .zoom { width: 34px; padding-left: 2px; }
footer .step { width: 10px; }
footer .step svg { width: 8px; height: 8px; }
```
